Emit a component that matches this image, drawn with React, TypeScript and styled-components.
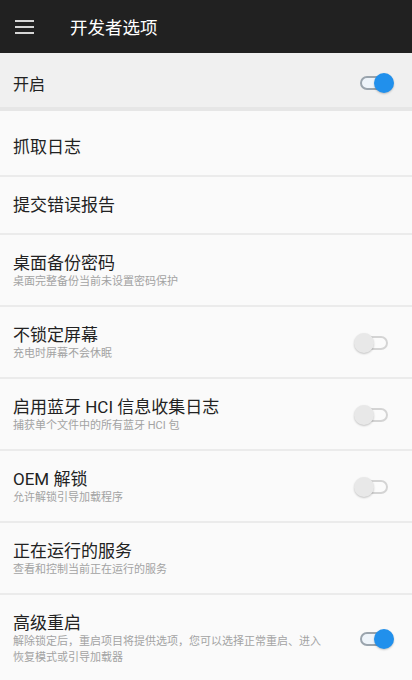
import React from 'react';
import styled, { createGlobalStyle } from 'styled-components';

const GlobalStyle = createGlobalStyle`
  body {
    margin: 0;
    background: #fafafa;
    font-family: Roboto, "Noto Sans CJK SC", sans-serif;
  }
`;

const Page = styled.div`
  display: flex;
  flex-direction: column;
  width: 412px;
  min-height: 680px;
  background: #fafafa;
`;

const Toolbar = styled.div`
  display: flex;
  align-items: center;
  height: 53px;
  background: #212121;
  padding-left: 15px;
`;

const MenuIcon = styled.div`
  display: flex;
  flex-direction: column;
  gap: 4px;
  width: 19px;
  margin-right: 36px;
  span {
    height: 2px;
    background: #d6d6d6;
  }
`;

const Title = styled.div`
  color: #ffffff;
  font-size: 17.5px;
  margin-top: -1px;
`;

const MasterRow = styled.div`
  display: flex;
  align-items: center;
  justify-content: space-between;
  height: 58px;
  padding: 6px 18px 0 13px;
  box-sizing: border-box;
  background: #f0f0f0;
  border-bottom: 4px solid #e6e6e6;
  color: #222;
  font-size: 16px;
`;

const Row = styled.div<{ $first?: boolean }>`
  display: flex;
  align-items: center;
  gap: 28px;
  padding: ${p => (p.$first ? '25px' : '17px')} 18px 15px 13px;
  border-bottom: 2px solid #ebebeb;
`;

const Texts = styled.div`
  flex: 1;
  display: flex;
  flex-direction: column;
`;

const ItemTitle = styled.div<{ $single?: boolean }>`
  color: #222;
  font-size: 17px;
  line-height: 22px;
  padding-bottom: ${p => (p.$single ? '2px' : '0')};
`;

const ItemSub = styled.div`
  color: #a3a3a3;
  font-size: 11px;
  line-height: 16px;
`;

const Switch = styled.div<{ $on?: boolean }>`
  position: relative;
  flex: none;
  width: 40px;
  height: 22px;
  &::before {
    content: '';
    position: absolute;
    left: 6px;
    top: 4px;
    width: 28px;
    height: 14px;
    box-sizing: border-box;
    border-radius: 7px;
    border: 2px solid ${p => (p.$on ? '#9aa4ad' : '#d4d4d4')};
    background: ${p => (p.$on ? '#eef4fa' : '#fbfbfb')};
  }
  &::after {
    content: '';
    position: absolute;
    top: 1px;
    left: ${p => (p.$on ? '20px' : '0')};
    width: 20px;
    height: 20px;
    border-radius: 50%;
    background: ${p => (p.$on ? '#2190ec' : '#e8e8e8')};
    box-shadow: 0 1px 2px rgba(0, 0, 0, 0.22);
  }
`;

type Item = { title: string; sub?: string; toggle?: boolean; on?: boolean };

const items: Item[] = [
  { title: '抓取日志' },
  { title: '提交错误报告' },
  { title: '桌面备份密码', sub: '桌面完整备份当前未设置密码保护' },
  { title: '不锁定屏幕', sub: '充电时屏幕不会休眠', toggle: true },
  { title: '启用蓝牙 HCI 信息收集日志', sub: '捕获单个文件中的所有蓝牙 HCI 包', toggle: true },
  { title: 'OEM 解锁', sub: '允许解锁引导加载程序', toggle: true },
  { title: '正在运行的服务', sub: '查看和控制当前正在运行的服务' },
  {
    title: '高级重启',
    sub: '解除锁定后，重启项目将提供选项，您可以选择正常重启、进入恢复模式或引导加载器',
    toggle: true,
    on: true,
  },
];

const App: React.FC = () => {
  return (
    <>
      <GlobalStyle />
      <Page>
        <Toolbar>
          <MenuIcon>
            <span />
            <span />
            <span />
          </MenuIcon>
          <Title>开发者选项</Title>
        </Toolbar>
        <MasterRow>
          开启
          <Switch $on />
        </MasterRow>
        {items.map((item, i) => (
          <Row key={item.title} $first={i === 0}>
            <Texts>
              <ItemTitle $single={!item.sub}>{item.title}</ItemTitle>
              {item.sub && <ItemSub>{item.sub}</ItemSub>}
            </Texts>
            {item.toggle && <Switch $on={item.on} />}
          </Row>
        ))}
      </Page>
    </>
  );
};

export default App;
